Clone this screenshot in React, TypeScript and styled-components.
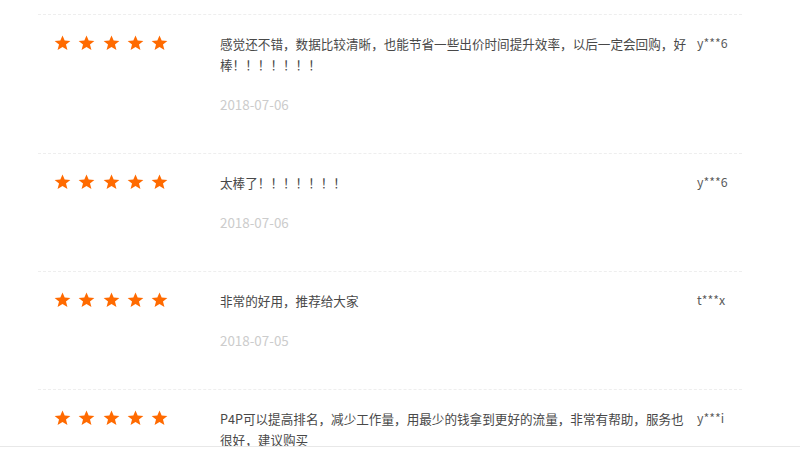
import styled, { createGlobalStyle } from 'styled-components'

interface Review {
    id: number
    rating: number
    content: string
    date: string
    user: string
}

const reviews: Review[] = [
    {
        id: 1,
        rating: 5,
        content: '感觉还不错，数据比较清晰，也能节省一些出价时间提升效率，以后一定会回购，好棒！！！！！！！',
        date: '2018-07-06',
        user: 'y***6',
    },
    { id: 2, rating: 5, content: '太棒了！！！！！！！', date: '2018-07-06', user: 'y***6' },
    { id: 3, rating: 5, content: '非常的好用，推荐给大家', date: '2018-07-05', user: 't***x' },
    {
        id: 4,
        rating: 5,
        content: 'P4P可以提高排名，减少工作量，用最少的钱拿到更好的流量，非常有帮助，服务也很好，建议购买',
        date: '2018-07-05',
        user: 'y***i',
    },
]

const GlobalStyle = createGlobalStyle`
    html, body {
        margin: 0;
        padding: 0;
        background: #fff;
        overflow: hidden;
    }
    body {
        font-family: "Noto Sans CJK SC", "Noto Sans", sans-serif;
    }
`

function Star() {
    return (
        <svg width="17" height="16" viewBox="0 0 24 23" aria-hidden>
            <polygon
                fill="#ff6a00"
                points="12,0.6 15.1,8 23.3,8.5 17,13.7 19.1,21.7 12,17.3 4.9,21.7 7,13.7 0.7,8.5 8.9,8"
            />
        </svg>
    )
}

export default function App() {
    return (
        <>
            <GlobalStyle />
            <ListStyled>
                {reviews.map((review) => (
                    <RowStyled key={review.id}>
                        <Stars>
                            {Array.from({ length: review.rating }).map((_, i) => (
                                <Star key={i} />
                            ))}
                        </Stars>
                        <Body>
                            <Content>{review.content}</Content>
                            <DateText>{review.date}</DateText>
                        </Body>
                        <User>{review.user}</User>
                    </RowStyled>
                ))}
            </ListStyled>
            <Footer />
        </>
    )
}

const ListStyled = styled.div`
    width: 704px;
    margin: 14px 0 0 38px;
`

const RowStyled = styled.div`
    display: grid;
    grid-template-columns: 166px 466px auto;
    padding: 18px 0 38px 16px;
    border-top: 1px dashed #eeeeee;
`

const Stars = styled.div`
    display: flex;
    gap: 7.3px;
    padding-top: 2px;
    height: 16px;
`

const Body = styled.div`
    display: flex;
    flex-direction: column;
    gap: 19px;
`

const Content = styled.div`
    font-size: 12.6px;
    line-height: 21px;
    color: #484848;
`

const DateText = styled.div`
    font-size: 13.4px;
    line-height: 21px;
    color: #cccccc;
`

const User = styled.div`
    padding-left: 11px;
    font-size: 12.4px;
    line-height: 21px;
    color: #5a5a5a;
`

const Footer = styled.div`
    position: fixed;
    left: 0;
    right: 0;
    bottom: 0;
    height: 5px;
    background: #fff;
    border-top: 1px solid #e8e8e8;
`
